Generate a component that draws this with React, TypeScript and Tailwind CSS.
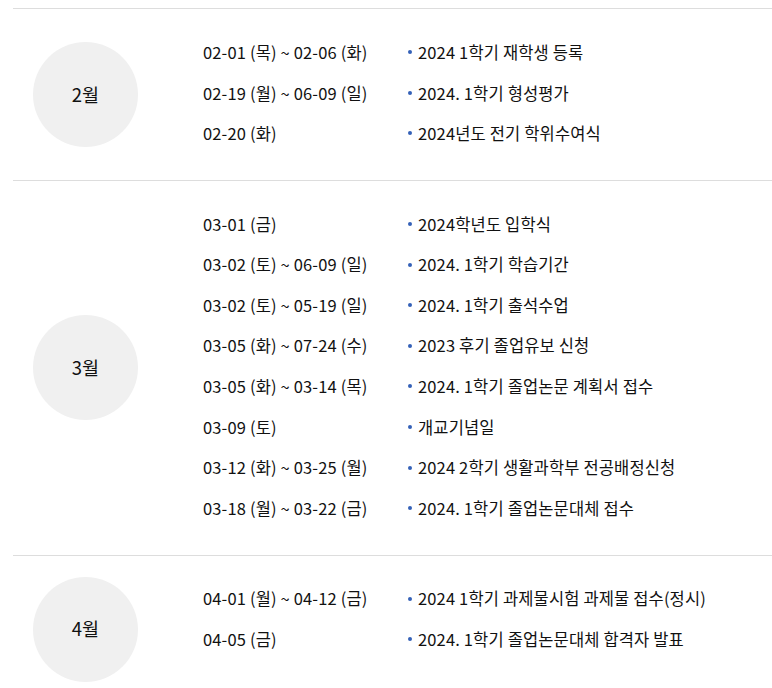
import React from "react";

type Item = { date: string; title: string };

const schedule: { month: string; items: Item[] }[] = [
  {
    month: "2월",
    items: [
      { date: "02-01 (목) ~ 02-06 (화)", title: "2024 1학기 재학생 등록" },
      { date: "02-19 (월) ~ 06-09 (일)", title: "2024. 1학기 형성평가" },
      { date: "02-20 (화)", title: "2024년도 전기 학위수여식" },
    ],
  },
  {
    month: "3월",
    items: [
      { date: "03-01 (금)", title: "2024학년도 입학식" },
      { date: "03-02 (토) ~ 06-09 (일)", title: "2024. 1학기 학습기간" },
      { date: "03-02 (토) ~ 05-19 (일)", title: "2024. 1학기 출석수업" },
      { date: "03-05 (화) ~ 07-24 (수)", title: "2023 후기 졸업유보 신청" },
      { date: "03-05 (화) ~ 03-14 (목)", title: "2024. 1학기 졸업논문 계획서 접수" },
      { date: "03-09 (토)", title: "개교기념일" },
      { date: "03-12 (화) ~ 03-25 (월)", title: "2024 2학기 생활과학부 전공배정신청" },
      { date: "03-18 (월) ~ 03-22 (금)", title: "2024. 1학기 졸업논문대체 접수" },
    ],
  },
  {
    month: "4월",
    items: [
      { date: "04-01 (월) ~ 04-12 (금)", title: "2024 1학기 과제물시험 과제물 접수(정시)" },
      { date: "04-05 (금)", title: "2024. 1학기 졸업논문대체 합격자 발표" },
    ],
  },
];

const MonthBlock = ({ month, items }: { month: string; items: Item[] }) => (
  <div className="flex items-center border-t border-[#dddddd] py-[21px]">
    <div className="ml-[20px] flex h-[105px] w-[105px] shrink-0 items-center justify-center rounded-full bg-[#f0f0f0] text-[18.5px] text-[#111]">
      {month}
    </div>
    <ul className="ml-[65px] self-start pb-[5px] pt-[2px]">
      {items.map((item) => (
        <li key={item.date + item.title} className="flex h-[40.6px] items-center text-[16.5px] tracking-[0.15px] text-[#111]">
          <span className="w-[205px] shrink-0">{item.date}</span>
          <span className="flex items-center">
            <span className="mr-[6px] h-[4px] w-[4px] rounded-full bg-[#3461b8]" />
            {item.title}
          </span>
        </li>
      ))}
    </ul>
  </div>
);

export default function App() {
  return (
    <div
      className="min-h-[688px] bg-white pl-[13px] pt-2"
      style={{ fontFamily: '"Noto Sans CJK KR", "Noto Sans", sans-serif' }}
    >
      {schedule.map((s) => (
        <MonthBlock key={s.month} month={s.month} items={s.items} />
      ))}
    </div>
  );
}
